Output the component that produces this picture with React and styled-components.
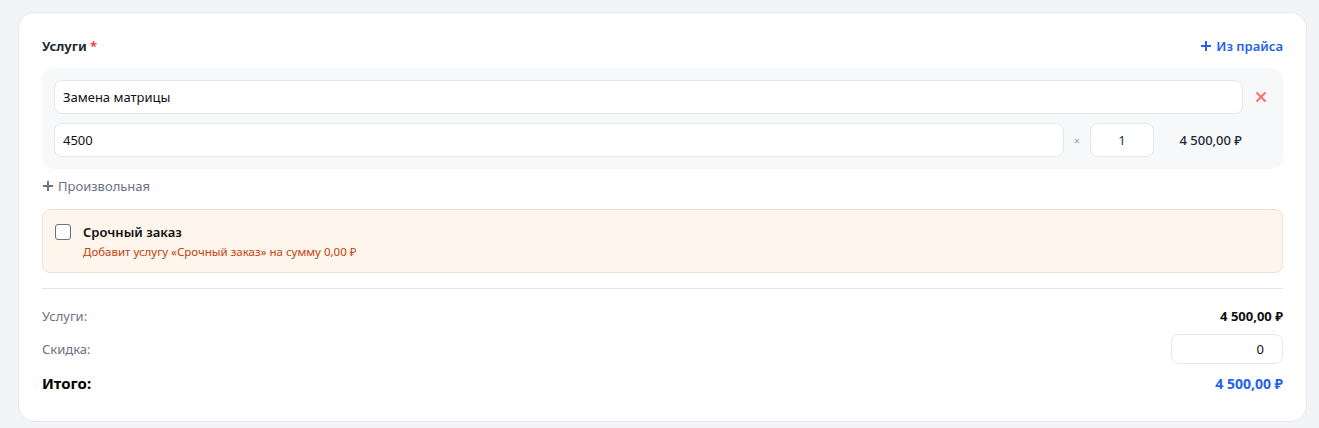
import React from 'react';
import styled, { createGlobalStyle } from 'styled-components';

const GlobalStyle = createGlobalStyle`
	body {
		margin: 0;
		background: #f3f4f6;
		font-family: "Segoe UI", "Noto Sans", "Open Sans", sans-serif;
		color: #111827;
	}
`

const Page = styled.div`
	padding: 12px 12px 7px 18px;
`

const Card = styled.div`
	background: #fff;
	border: 1px solid #e5e7eb;
	border-radius: 16px;
	padding: 24px 23px 22px 23px;
	display: flex;
	flex-direction: column;
`

const Header = styled.div`
	display: flex;
	justify-content: space-between;
	align-items: center;
	height: 18px;
	margin-bottom: 13px;
`

const Title = styled.div`
	font-size: 13px;
	font-weight: 700;
	color: #1f2937;
	span { color: #ef4444; }
`

const LinkButton = styled.button`
	display: flex;
	align-items: center;
	gap: 4px;
	border: 0;
	background: none;
	padding: 0;
	font: inherit;
	font-size: 13px;
	font-weight: ${p => p.$muted ? 400 : 600};
	color: ${p => p.$muted ? '#6b7280' : '#2563eb'};
	cursor: pointer;
`

const ServiceBlock = styled.div`
	background: #f7f8fa;
	border-radius: 12px;
	padding: 12px;
	display: flex;
	gap: 8px;
`

const Rows = styled.div`
	flex: 1;
	display: flex;
	flex-direction: column;
	gap: 9px;
`

const Row = styled.div`
	display: flex;
	align-items: center;
	gap: 10px;
`

const Input = styled.input`
	box-sizing: border-box;
	height: 34px;
	border: 1px solid #e5e7eb;
	border-radius: 8px;
	background: #fff;
	padding: 0 8px;
	font: inherit;
	font-size: 13px;
	color: ${p => p.$accent ? '#1e3356' : '#111'};
	text-align: ${p => p.$align || 'left'};
	width: ${p => p.$width || 'auto'};
	flex: ${p => p.$grow ? 1 : 'none'};
	min-width: 0;
	outline: none;
`

const Times = styled.span`
	font-size: 11px;
	color: #9ca3af;
`

const LineTotal = styled.div`
	width: 66px;
	margin-left: 12px;
	margin-right: 1px;
	text-align: right;
	font-size: 13px;
	font-weight: 500;
	color: #1f2937;
	white-space: nowrap;
`

const RemoveButton = styled.button`
	width: 20px;
	height: 34px;
	border: 0;
	background: none;
	padding: 0;
	display: flex;
	align-items: center;
	justify-content: center;
	cursor: pointer;
`

const AddRow = styled.div`
	margin: 8px 0 14px;
	height: 18px;
	display: flex;
	align-items: center;
`

const Urgent = styled.label`
	display: flex;
	gap: 12px;
	align-items: flex-start;
	background: #fef5ec;
	border: 1px solid #efe1d4;
	border-radius: 8px;
	padding: 14px 12px 13px 12px;
`

const Check = styled.span`
	box-sizing: border-box;
	width: 16px;
	height: 16px;
	border: 1.5px solid #6b7280;
	border-radius: 3px;
	background: #fff;
	flex: none;
`

const UrgentText = styled.div`
	display: flex;
	flex-direction: column;
	gap: 4px;
`

const UrgentTitle = styled.div`
	font-size: 13px;
	font-weight: 600;
	color: #111;
	line-height: 16px;
`

const UrgentHint = styled.div`
	font-size: 11.5px;
	color: #c2410c;
	line-height: 15px;
`

const Divider = styled.hr`
	border: 0;
	border-top: 1px solid #e5e7eb;
	margin: 15px 0 12px;
`

const Summary = styled.div`
	display: flex;
	flex-direction: column;
`

const SummaryRow = styled.div`
	display: flex;
	justify-content: space-between;
	align-items: center;
	min-height: ${p => p.$h || 30}px;
	font-size: ${p => p.$total ? 15 : 13}px;
	color: ${p => p.$total ? '#000' : '#6b7280'};
	font-weight: ${p => p.$total ? 700 : 400};
`

const Amount = styled.div`
	font-size: ${p => p.$total ? 14 : 13}px;
	font-weight: 700;
	color: ${p => p.$total ? '#2563eb' : '#111'};
`

const Plus = ({ color, size = 12, width = 2 }) => (
	<svg width={size} height={size} viewBox="0 0 12 12">
		<path d="M6 1v10M1 6h10" stroke={color} strokeWidth={width} strokeLinecap="butt" />
	</svg>
)

const App = () => (
	<Page>
		<GlobalStyle />
		<Card>
			<Header>
				<Title>Услуги <span>*</span></Title>
				<LinkButton><Plus color="#2563eb" />Из прайса</LinkButton>
			</Header>
			<ServiceBlock>
				<Rows>
					<Row>
						<Input $grow defaultValue="Замена матрицы" />
					</Row>
					<Row>
						<Input $grow defaultValue="4500" />
						<Times>×</Times>
						<Input $width="64px" $align="center" $accent defaultValue="1" />
						<LineTotal>4 500,00 ₽</LineTotal>
					</Row>
				</Rows>
				<RemoveButton>
					<svg width="12" height="12" viewBox="0 0 12 12">
						<path d="M1.5 1.5l9 9M10.5 1.5l-9 9" stroke="#f87171" strokeWidth="2" />
					</svg>
				</RemoveButton>
			</ServiceBlock>
			<AddRow>
				<LinkButton $muted><Plus color="#6b7280" size={12} />Произвольная</LinkButton>
			</AddRow>
			<Urgent>
				<Check />
				<UrgentText>
					<UrgentTitle>Срочный заказ</UrgentTitle>
					<UrgentHint>Добавит услугу «Срочный заказ» на сумму 0,00 ₽</UrgentHint>
				</UrgentText>
			</Urgent>
			<Divider />
			<Summary>
				<SummaryRow $h={30}>
					<span>Услуги:</span>
					<Amount>4 500,00 ₽</Amount>
				</SummaryRow>
				<SummaryRow $h={36}>
					<span>Скидка:</span>
					<Input $width="112px" $align="right" style={{ height: 30, paddingRight: 18 }} defaultValue="0" />
				</SummaryRow>
				<SummaryRow $h={32} $total>
					<span>Итого:</span>
					<Amount $total>4 500,00 ₽</Amount>
				</SummaryRow>
			</Summary>
		</Card>
	</Page>
)

export default App;
